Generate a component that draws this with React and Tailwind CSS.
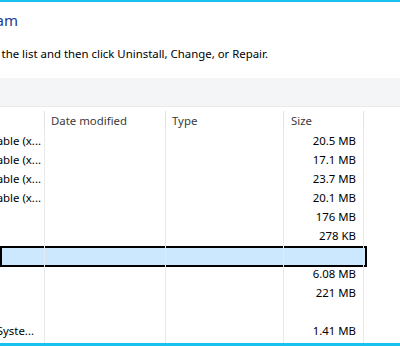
import React from "react";

const rows = [
  { name: "Microsoft Visual C++ 2013 Redistributable (x...", size: "20.5 MB" },
  { name: "Microsoft Visual C++ 2015 Redistributable (x...", size: "17.1 MB" },
  { name: "Microsoft Visual C++ 2017 Redistributable (x...", size: "23.7 MB" },
  { name: "Microsoft Visual C++ 2019 Redistributable (x...", size: "20.1 MB" },
  { name: "", size: "176 MB" },
  { name: "", size: "278 KB" },
  { name: "", size: "", selected: true },
  { name: "", size: "6.08 MB" },
  { name: "", size: "221 MB" },
  { name: "", size: "" },
  { name: "Windows Driver Package - Syste...", size: "1.41 MB", namePad: "pr-[10px]" },
];

function Row({ row }) {
  return (
    <div className="relative flex h-[19px] text-[11.4px] text-black">
      {row.selected && (
        <div className="absolute left-0 top-[1px] h-[21px] w-[367px] border-2 border-black bg-[#cce8ff]" />
      )}
      <div className={`relative flex w-[45px] justify-end items-center overflow-hidden whitespace-nowrap border-r border-[#e8e8e8] ${row.namePad || "pr-[3px]"}`}>
        <span className="shrink-0">{row.name}</span>
      </div>
      <div className="relative w-[121px] border-r border-[#e8e8e8]" />
      <div className="relative w-[118px] border-r border-[#e8e8e8]" />
      <div className="relative flex w-[80px] items-center justify-end border-r border-[#e8e8e8] pr-[7px]">
        {row.size}
      </div>
    </div>
  );
}

export default function App() {
  return (
    <div
      className="flex h-[346px] w-[400px] flex-col overflow-hidden bg-white"
      style={{ fontFamily: '"Noto Sans", "Open Sans", sans-serif' }}
    >
      <div className="h-[2px] bg-[#19c1ef]" />

      {/* heading */}
      <div className="flex h-[76px] flex-col">
        <div className="mt-[8px] flex w-[18px] justify-end whitespace-nowrap text-[15px] leading-[20px] text-[#1e3a8f]">
          <span className="shrink-0">Uninstall or change a program</span>
        </div>
        <div className="mt-[16px] flex w-[268px] justify-end whitespace-nowrap text-[11.4px] leading-[16px] text-black">
          <span className="shrink-0">
            To uninstall a program, select it from the list and then click Uninstall, Change, or Repair.
          </span>
        </div>
      </div>

      {/* command bar */}
      <div className="h-[29px] border-b border-[#ebebeb] bg-[#f4f5f6]" />

      {/* column header */}
      <div className="flex h-[24px] pt-[4px] text-[11.4px] text-[#3a3a3a]">
        <div className="w-[45px] border-r border-[#e3e3e3]" />
        <div className="flex w-[121px] items-center border-r border-[#e3e3e3] pl-[6px]">Date modified</div>
        <div className="flex w-[118px] items-center border-r border-[#e3e3e3] pl-[6px]">Type</div>
        <div className="flex w-[80px] items-center border-r border-[#e3e3e3] pl-[7px]">Size</div>
      </div>

      {/* list */}
      <div className="flex flex-1 flex-col">
        {rows.map((row, i) => (
          <Row key={i} row={row} />
        ))}
        <div className="flex flex-1">
          <div className="w-[45px] border-r border-[#e8e8e8]" />
          <div className="w-[121px] border-r border-[#e8e8e8]" />
          <div className="w-[118px] border-r border-[#e8e8e8]" />
          <div className="w-[80px] border-r border-[#e8e8e8]" />
        </div>
      </div>

      <div className="h-[3px] bg-[#19c1ef]" />
    </div>
  );
}
